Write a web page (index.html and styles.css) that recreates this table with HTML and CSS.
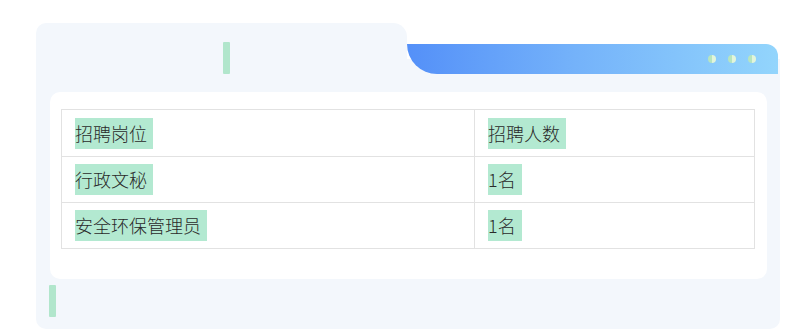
FILE: index.html
```html
<!DOCTYPE html>
<html lang="zh-CN">
<head>
<meta charset="utf-8">
<link rel="stylesheet" href="styles.css">
</head>
<body>
<div class="card">
  <div class="head">
    <div class="tab"><span class="mark"></span></div>
    <div class="side">
      <div class="bar">
        <span class="dot"></span><span class="dot"></span><span class="dot"></span>
      </div>
    </div>
  </div>
  <div class="body">
    <div class="panel">
      <table class="jobs">
        <colgroup><col class="c1"><col class="c2"></colgroup>
        <tr class="first"><td><span class="hl">招聘岗位</span></td><td><span class="hl">招聘人数</span></td></tr>
        <tr><td><span class="hl">行政文秘</span></td><td><span class="hl">1名</span></td></tr>
        <tr><td><span class="hl">安全环保管理员</span></td><td><span class="hl">1名</span></td></tr>
      </table>
    </div>
  </div>
  <div class="foot"><span class="mark foot-mark"></span></div>
</div>
</body>
</html>
```
FILE: styles.css
```css
html, body {
  margin: 0;
  padding: 0;
  background: #ffffff;
  font-family: "Noto Sans CJK SC", "Noto Sans", sans-serif;
}

.card {
  width: 744px;
  margin: 23px 0 0 36px;
}

.head {
  display: flex;
  height: 69px;
}

.tab {
  flex: 0 0 371px;
  background: #f3f7fc;
  border-radius: 10px 14px 0 0;
  padding: 19px 0 0 187px;
  box-sizing: border-box;
}

.mark {
  display: block;
  width: 7px;
  height: 32px;
  background: #b1e6cc;
  border-radius: 1px;
}

.side {
  flex: 1;
  padding-top: 21px;
  box-sizing: border-box;
  background: linear-gradient(#ffffff 0 36px, #f3f7fc 36px);
}

.bar {
  height: 30px;
  margin-right: 2px;
  border-radius: 0 12px 0 30px;
  background: linear-gradient(90deg, #5490f8 0%, #74b2fa 45%, #93d5fc 100%);
  display: flex;
  align-items: center;
  justify-content: flex-end;
  gap: 12px;
  padding-right: 22px;
}

.dot {
  width: 8px;
  height: 8px;
  border-radius: 50%;
  background: linear-gradient(90deg, #b7e5bf 50%, #e2f5da 50%);
}

.body {
  background: #f3f7fc;
  padding: 0 13px 0 14px;
}

.panel {
  background: #ffffff;
  border-radius: 10px;
  padding: 17px 13px 30px 11px;
}

.jobs {
  width: 693px;
  border-collapse: collapse;
  table-layout: fixed;
  font-size: 18px;
  font-weight: 300;
  color: #2a2a2a;
}

.c1 { width: 413px; }
.c2 { width: 280px; }

.jobs td {
  border: 1px solid #e2e2e2;
  height: 45px;
  padding: 0 0 0 13px;
  vertical-align: middle;
}

.jobs tr.first td {
  height: 46px;
}

.hl {
  display: inline-block;
  background: #b3e9d1;
  line-height: 31px;
  padding-right: 6px;
}

.foot {
  background: #f3f7fc;
  border-radius: 0 0 10px 10px;
  padding: 6px 0 12px 13px;
}
```
